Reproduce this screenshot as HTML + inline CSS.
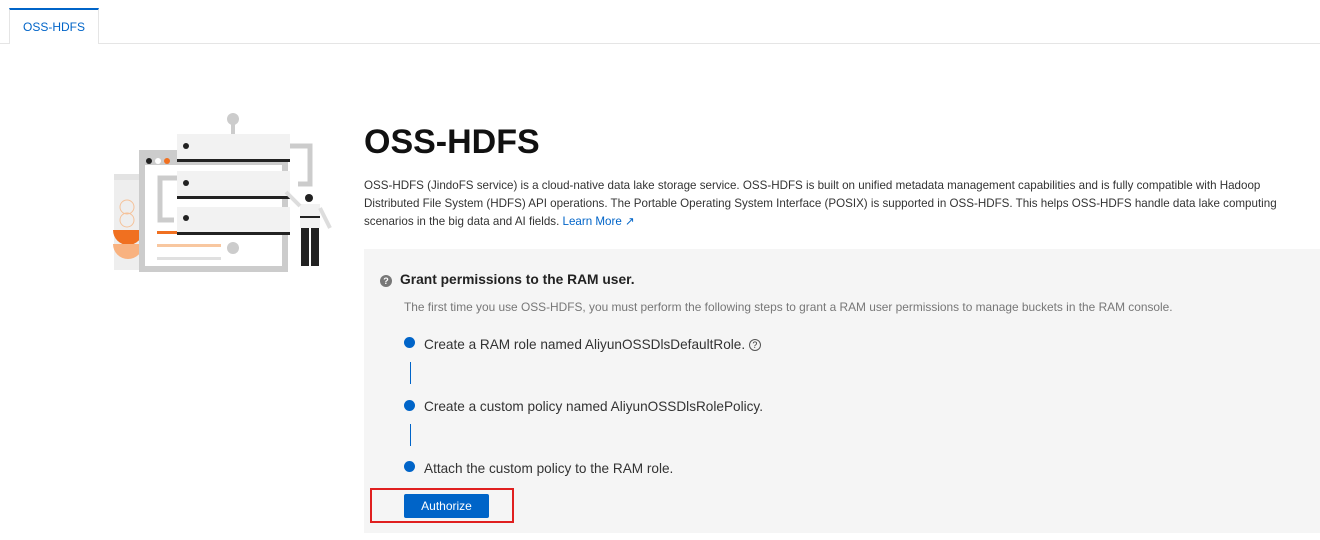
<html><head><style>
body{margin:0;width:1320px;height:540px;background:#fff;font-family:"Liberation Sans",sans-serif;position:relative;overflow:hidden;color:#333}
.a{position:absolute}
</style></head><body>
<div class="a" style="left:9px;top:8px;width:88px;height:34px;border-top:2px solid #0064c8;border-left:1px solid #e5e5e5;border-right:1px solid #e5e5e5;background:#fff;z-index:2;font-size:12px;color:#0064c8;text-align:center;line-height:34px">OSS-HDFS</div>
<div class="a" style="left:0;top:43px;width:1320px;height:1px;background:#e5e5e5"></div>
<svg class="a" style="left:100px;top:100px" width="250" height="180">
<rect x="131" y="15" width="4" height="20" fill="#ccc"/><circle cx="133" cy="19" r="6" fill="#ccc"/>
<rect x="14" y="74" width="30" height="96" fill="#eee"/><rect x="14" y="74" width="30" height="6" fill="#e3e3e3"/>
<circle cx="27" cy="107" r="7" fill="none" stroke="#f5c29a"/><circle cx="27" cy="120" r="7" fill="none" stroke="#f5c29a"/>
<path d="M13 130 h30 a15 15 0 0 1 -30 0z" fill="#f07020"/><path d="M13 144 h30 a15 15 0 0 1 -30 0z" fill="#f8b280"/>
<rect x="42" y="53" width="143" height="116" fill="none" stroke="#ccc" stroke-width="6"/>
<rect x="42" y="53" width="143" height="12" fill="#ccc"/>
<circle cx="49" cy="61" r="3" fill="#222"/><circle cx="58" cy="61" r="3" fill="#fff"/><circle cx="67" cy="61" r="3" fill="#f07020"/>
<rect x="77" y="34" width="113" height="28" fill="#f2f2f2"/><rect x="77" y="59" width="113" height="3" fill="#222"/><circle cx="86" cy="46" r="3" fill="#222"/>
<rect x="77" y="71" width="113" height="28" fill="#f2f2f2"/><rect x="77" y="96" width="113" height="3" fill="#222"/><circle cx="86" cy="83" r="3" fill="#222"/>
<rect x="77" y="107" width="113" height="28" fill="#f2f2f2"/><rect x="77" y="132" width="113" height="3" fill="#222"/><circle cx="86" cy="118" r="3" fill="#222"/>
<rect x="57" y="131" width="20" height="3" fill="#f07020"/><rect x="57" y="144" width="64" height="3" fill="#f8c7a0"/><rect x="57" y="157" width="64" height="3" fill="#e0e0e0"/>
<path d="M190 46 h20 v38 h-12" fill="none" stroke="#ccc" stroke-width="5"/>
<path d="M77 78 h-17 v42 h14" fill="none" stroke="#ccc" stroke-width="5"/>
<circle cx="133" cy="148" r="6" fill="#ccc"/>
<circle cx="209" cy="98" r="4" fill="#222"/><rect x="200" y="104" width="20" height="24" fill="#f2f2f2"/><rect x="200" y="116" width="20" height="2" fill="#222"/>
<rect x="201" y="128" width="8" height="38" fill="#222"/><rect x="211" y="128" width="8" height="38" fill="#222"/>
<path d="M200 106 l-14 -14" stroke="#ddd" stroke-width="4"/><path d="M220 108 l10 20" stroke="#ddd" stroke-width="4"/>
</svg>
<div class="a" style="left:364px;top:123px;font-size:34px;font-weight:bold;color:#111">OSS-HDFS</div>
<div class="a" style="left:364px;top:177px;width:930px;font-size:11.6px;line-height:18px;color:#333">OSS-HDFS (JindoFS service) is a cloud-native data lake storage service. OSS-HDFS is built on unified metadata management capabilities and is fully compatible with Hadoop Distributed File System (HDFS) API operations. The Portable Operating System Interface (POSIX) is supported in OSS-HDFS. This helps OSS-HDFS handle data lake computing scenarios in the big data and AI fields. <span style="color:#0064c8">Learn More ↗</span></div>
<div class="a" style="left:364px;top:249px;width:956px;height:284px;background:#f5f5f5"></div>
<div class="a" style="left:380px;top:275px;width:12px;height:12px;border-radius:50%;background:#777;color:#fff;font-size:9px;text-align:center;line-height:12px;font-weight:bold">?</div>
<div class="a" style="left:400px;top:272px;font-size:13.8px;font-weight:bold;color:#222">Grant permissions to the RAM user.</div>
<div class="a" style="left:404px;top:300px;font-size:11.9px;color:#777">The first time you use OSS-HDFS, you must perform the following steps to grant a RAM user permissions to manage buckets in the RAM console.</div>
<div class="a" style="left:404px;top:337px;width:11px;height:11px;border-radius:50%;background:#0064c8"></div>
<div class="a" style="left:410px;top:362px;width:1px;height:22px;background:#0064c8"></div>
<div class="a" style="left:404px;top:400px;width:11px;height:11px;border-radius:50%;background:#0064c8"></div>
<div class="a" style="left:410px;top:424px;width:1px;height:22px;background:#0064c8"></div>
<div class="a" style="left:404px;top:461px;width:11px;height:11px;border-radius:50%;background:#0064c8"></div>
<div class="a" style="left:424px;top:337px;font-size:13.6px;color:#333">Create a RAM role named AliyunOSSDlsDefaultRole. <span style="display:inline-block;width:10px;height:10px;border:1px solid #555;border-radius:50%;font-size:9px;line-height:10px;text-align:center;vertical-align:1px">?</span></div>
<div class="a" style="left:424px;top:399px;font-size:13.6px;color:#333">Create a custom policy named AliyunOSSDlsRolePolicy.</div>
<div class="a" style="left:424px;top:461px;font-size:13.6px;color:#333">Attach the custom policy to the RAM role.</div>
<div class="a" style="left:370px;top:488px;width:144px;height:35px;border:2px solid #e02020;box-sizing:border-box"></div>
<div class="a" style="left:404px;top:494px;width:85px;height:24px;background:#0064c8;color:#fff;font-size:12px;text-align:center;line-height:24px;border-radius:2px">Authorize</div>
</body></html>
